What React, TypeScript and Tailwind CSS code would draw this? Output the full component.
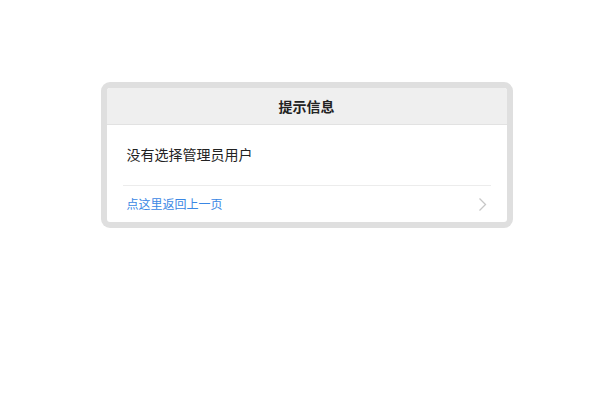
import React from 'react'

// ── Chevron ───────────────────────────────────────────────────────────────────

function Chevron() {
  return (
    <svg width="9" height="15" viewBox="0 0 9 15" className="block">
      <path d="M1.5 1.5 L7.5 7.5 L1.5 13.5" fill="none" stroke="#c7c7c7" strokeWidth="1.3" />
    </svg>
  )
}

// ── Page ──────────────────────────────────────────────────────────────────────

export default function App() {
  const font = { fontFamily: '"Noto Sans CJK SC", "Noto Sans", sans-serif' }

  return (
    <div className="w-[613px] h-[393px] bg-white pt-[82px]" style={font}>
      <div className="mx-auto w-[412px] rounded-[9px] bg-[#dfdfdf] p-[6px]">
        <div className="bg-white rounded-[3px] overflow-hidden">
          {/* Header */}
          <div className="h-[37px] bg-[#efefef] border-b border-[#e2e2e2] flex items-center justify-center">
            <span className="text-[14px] font-bold text-[#222] leading-none">提示信息</span>
          </div>

          {/* Message */}
          <div className="h-[60px] px-5 pb-[3px] flex items-center">
            <span className="text-[14px] text-[#222] leading-none">没有选择管理员用户</span>
          </div>

          <div className="mx-4 border-t border-[#ececec]" />

          {/* Back link */}
          <div className="h-[36px] pl-5 pr-[20px] flex items-center justify-between">
            <span className="text-[12px] text-[#3a87e4] leading-none">点这里返回上一页</span>
            <Chevron />
          </div>
        </div>
      </div>
    </div>
  )
}
